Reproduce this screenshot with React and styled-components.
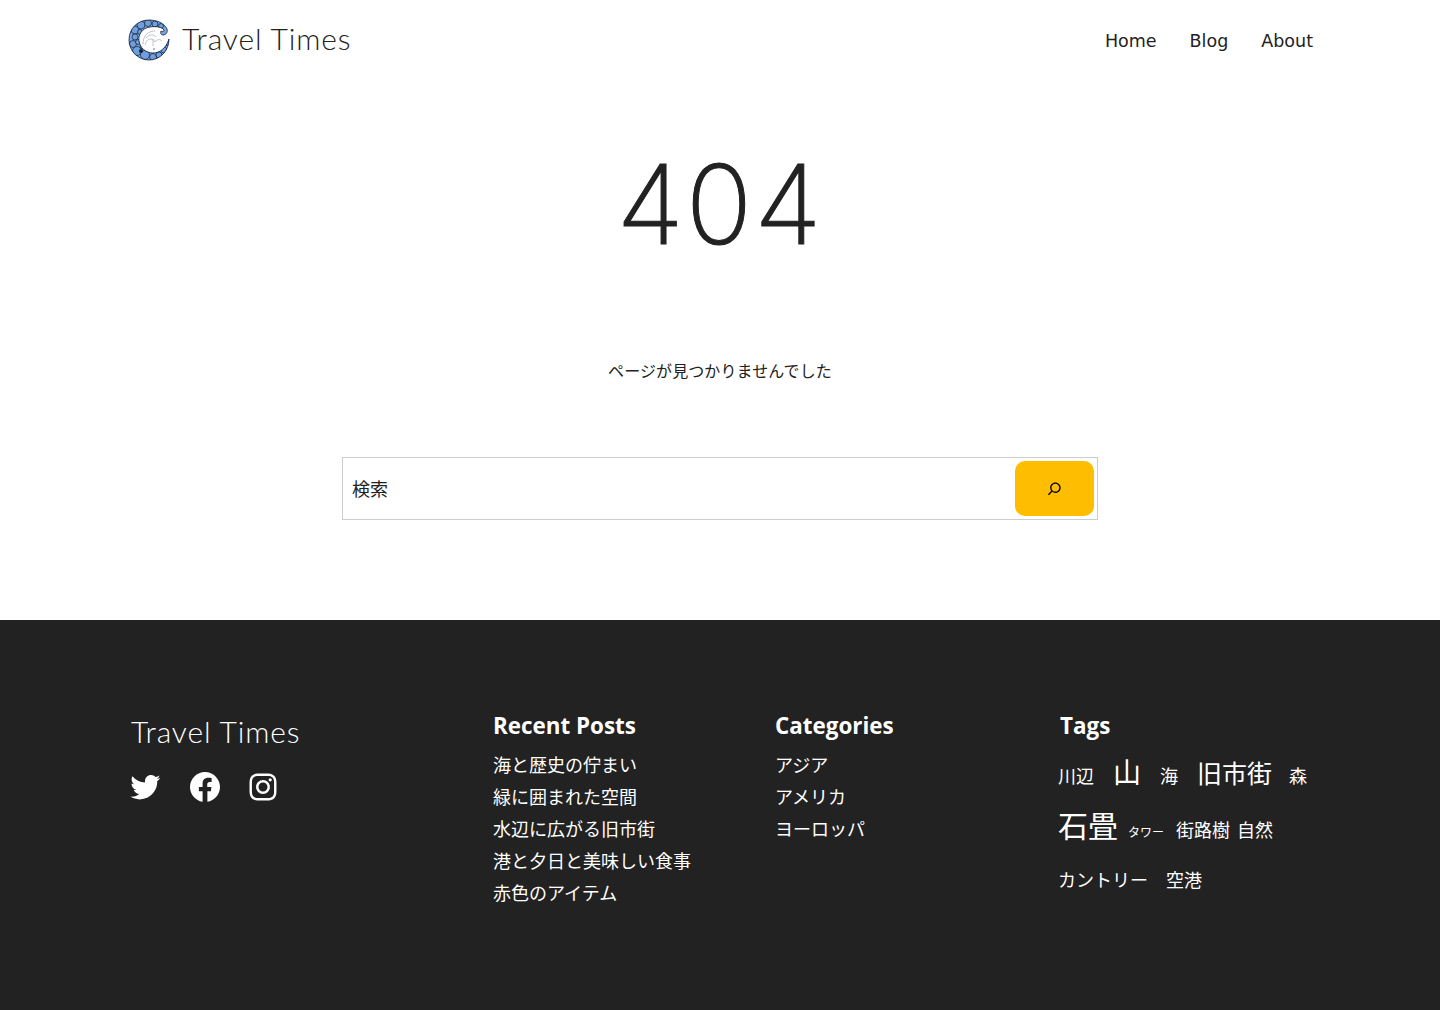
import React from 'react';
import styled, { createGlobalStyle } from 'styled-components';

const GlobalStyle = createGlobalStyle`
	* { box-sizing: border-box; }
	body {
		margin: 0;
		background: #fff;
		color: #222;
		font-family: "DejaVu Sans", "Noto Sans CJK JP", sans-serif;
	}
	a { color: inherit; text-decoration: none; }
`;

const Header = styled.header`
	height: 80px;
	padding: 0 127px 0 128px;
	display: flex;
	align-items: center;
	justify-content: space-between;
`;

const Brand = styled.div`
	display: flex;
	align-items: center;
	gap: 10px;
`;

const BrandName = styled.a`
	font-family: Lato, sans-serif;
	font-weight: 300;
	font-size: 30px;
	letter-spacing: 0.85px;
	line-height: 1;
	position: relative;
	top: -2px;
`;

const Nav = styled.nav`
	display: flex;
	gap: 33px;
	font-size: 17.5px;
	padding-top: 2px;
`;

const Main = styled.main`
	height: 540px;
	display: flex;
	flex-direction: column;
	align-items: center;
`;

const Title = styled.h1`
	margin: 43px 0 0;
	font-family: Inter, sans-serif;
	font-weight: 200;
	font-size: 110px;
	letter-spacing: 2px;
	line-height: 162px;
	-webkit-text-stroke: 1px #222;
`;

const Message = styled.p`
	margin: 75px 0 0;
	font-size: 16px;
	line-height: 24px;
	letter-spacing: 0.1px;
`;

const SearchForm = styled.form`
	margin-top: 73px;
	width: 756px;
	height: 63px;
	padding: 3px;
	display: flex;
	border: 1px solid #ccc;
`;

const SearchInput = styled.input`
	flex: 1;
	min-width: 0;
	padding: 2px 6px 0;
	border: none;
	outline: none;
	font: 18px "DejaVu Sans", "Noto Sans CJK JP", sans-serif;
	color: #222;
	&::placeholder { color: #222; opacity: 1; }
`;

const SearchButton = styled.button`
	width: 79px;
	border: none;
	border-radius: 10px;
	background: #ffbd00;
	display: flex;
	align-items: center;
	justify-content: center;
	padding: 0;
`;

const Footer = styled.footer`
	height: 390px;
	background: #222;
	color: #fff;
	padding: 89px 127px 0;
	display: grid;
	grid-template-columns: 366px 282px 283px 1fr;
`;

const BrandColumn = styled.div`
	padding-top: 9px;
`;

const FooterBrand = styled.div`
	padding-left: 4px;
`;

const Social = styled.div`
	margin-top: 20px;
	display: flex;
	gap: 24px;
`;

const SocialIcon = styled.svg`
	width: 36px;
	height: 36px;
	fill: #fff;
	margin-left: ${({ $nudge }) => $nudge || 0}px;
`;

const Heading = styled.h2`
	margin: 2px 0 9px;
	font-family: "Open Sans", sans-serif;
	font-size: 22.4px;
	line-height: 30px;
	font-weight: 700;
	padding-left: ${({ $indent }) => $indent || 0}px;
`;

const LinkList = styled.ul`
	margin: 0;
	padding: 0;
	list-style: none;
`;

const LinkItem = styled.li`
	font-size: 18px;
	line-height: 32px;
`;

const TagCloud = styled.div`
	width: 260px;
	display: flex;
	flex-wrap: wrap;
	align-items: baseline;
	row-gap: 10px;
	margin-top: 13px;
`;

const Tag = styled.a`
	font-size: ${({ $size }) => $size}px;
	line-height: ${({ $size }) => ($size < 14 ? 30 : 40)}px;
	margin-right: ${({ $gap }) => $gap}px;
`;

const CRESCENT = 'M41 21C41 33 32 42 21 42C10 42 1 33 1 22C1 10 10 2 21 2C29 2 36 5 39 11C40 14 38 17 35 17C33 17 32 15 33 13C34 14 36 14 36 12C34 9 28 8 22 9C14 10 10 17 11 23C12 30 18 35 25 35C32 35 38 30 41 21Z';

const logoCells = [
	[7, 12, 4], [13, 7, 4], [20, 5, 3.5], [27, 6, 3], [33, 8, 2.5], [7, 19, 3], [5, 26, 3.5], [10, 24, 2.5],
	[9, 33, 4.5], [15, 28, 3], [17, 37, 4.5], [25, 39, 3.5], [31, 37, 3], [36, 32, 3], [39, 25, 2.5], [12, 14, 2.5],
];

function Logo() {
	return (
		<svg width="44" height="44" viewBox="0 0 44 44">
			<defs>
				<clipPath id="crescent"><path d={CRESCENT} /></clipPath>
			</defs>
			<g clipPath="url(#crescent)">
				<rect width="44" height="44" fill="#7aa7e0" />
				{logoCells.map(([cx, cy, r]) => (
					<circle key={`${cx}-${cy}`} cx={cx} cy={cy} r={r} fill="#6f9fdc" stroke="#14213a" strokeWidth=".7" />
				))}
				<circle cx="13" cy="33" r="2" fill="#14213a" />
			</g>
			<path d={CRESCENT} fill="none" stroke="#14213a" strokeWidth=".8" />
			<path d="M15 26c0-8 5-13 12-13M18 20c3-4 8-4 10-1M17 27c1-4 3-6 6-6 2 0 3 1 4 3 2-3 5-3 7-1M25 21v7" fill="none" stroke="#a4abb3" strokeWidth=".7" />
			<path d="M26 30v2" stroke="#5f90d2" strokeWidth="1.2" />
		</svg>
	);
}

function TwitterIcon() {
	return (
		<SocialIcon viewBox="0 0 24 24">
			<path d="M22.23,5.924c-0.736,0.326-1.527,0.547-2.357,0.646c0.847-0.508,1.498-1.312,1.804-2.27 c-0.793,0.47-1.671,0.812-2.606,0.996C18.324,4.498,17.257,4,16.077,4c-2.266,0-4.103,1.837-4.103,4.103 c0,0.322,0.036,0.635,0.106,0.935C8.67,8.867,5.647,7.234,3.623,4.751C3.27,5.357,3.067,6.062,3.067,6.814 c0,1.424,0.724,2.679,1.825,3.415c-0.673-0.021-1.305-0.206-1.859-0.513c0,0.017,0,0.034,0,0.052c0,1.988,1.414,3.647,3.292,4.023 c-0.344,0.094-0.707,0.144-1.081,0.144c-0.264,0-0.521-0.026-0.772-0.074c0.522,1.63,2.038,2.816,3.833,2.85 c-1.404,1.1-3.174,1.756-5.096,1.756c-0.331,0-0.658-0.019-0.979-0.057c1.816,1.164,3.973,1.843,6.29,1.843 c7.547,0,11.675-6.252,11.675-11.675c0-0.178-0.004-0.355-0.012-0.531C20.985,7.47,21.68,6.747,22.23,5.924z" />
		</SocialIcon>
	);
}

function FacebookIcon() {
	return (
		<SocialIcon viewBox="0 0 24 24">
			<path d="M12 2C6.5 2 2 6.5 2 12c0 5 3.7 9.1 8.4 9.9v-7H7.9V12h2.5V9.8c0-2.5 1.5-3.9 3.8-3.9 1.1 0 2.2.2 2.2.2v2.5h-1.3c-1.2 0-1.6.8-1.6 1.6V12h2.8l-.4 2.9h-2.3v7C18.3 21.1 22 17 22 12c0-5.5-4.5-10-10-10z" />
		</SocialIcon>
	);
}

function InstagramIcon() {
	return (
		<SocialIcon viewBox="0 0 24 24" $nudge={-2}>
			<path d="M12,4.622c2.403,0,2.688,0.009,3.637,0.052c0.877,0.04,1.354,0.187,1.671,0.31c0.42,0.163,0.72,0.358,1.035,0.673 c0.315,0.315,0.51,0.615,0.673,1.035c0.123,0.317,0.27,0.794,0.31,1.671c0.043,0.949,0.052,1.234,0.052,3.637 s-0.009,2.688-0.052,3.637c-0.04,0.877-0.187,1.354-0.31,1.671c-0.163,0.42-0.358,0.72-0.673,1.035 c-0.315,0.315-0.615,0.51-1.035,0.673c-0.317,0.123-0.794,0.27-1.671,0.31c-0.949,0.043-1.233,0.052-3.637,0.052 s-2.688-0.009-3.637-0.052c-0.877-0.04-1.354-0.187-1.671-0.31c-0.42-0.163-0.72-0.358-1.035-0.673 c-0.315-0.315-0.51-0.615-0.673-1.035c-0.123-0.317-0.27-0.794-0.31-1.671C4.631,14.688,4.622,14.403,4.622,12 s0.009-2.688,0.052-3.637c0.04-0.877,0.187-1.354,0.31-1.671c0.163-0.42,0.358-0.72,0.673-1.035 c0.315-0.315,0.615-0.51,1.035-0.673c0.317-0.123,0.794-0.27,1.671-0.31C9.312,4.631,9.597,4.622,12,4.622 M12,3 C9.556,3,9.249,3.01,8.289,3.054C7.331,3.098,6.677,3.25,6.105,3.472C5.513,3.702,5.011,4.01,4.511,4.511 c-0.5,0.5-0.808,1.002-1.038,1.594C3.25,6.677,3.098,7.331,3.054,8.289C3.01,9.249,3,9.556,3,12c0,2.444,0.01,2.751,0.054,3.711 c0.044,0.958,0.196,1.612,0.418,2.185c0.23,0.592,0.538,1.094,1.038,1.594c0.5,0.5,1.002,0.808,1.594,1.038 c0.572,0.222,1.227,0.375,2.185,0.418C9.249,20.99,9.556,21,12,21s2.751-0.01,3.711-0.054c0.958-0.044,1.612-0.196,2.185-0.418 c0.592-0.23,1.094-0.538,1.594-1.038c0.5-0.5,0.808-1.002,1.038-1.594c0.222-0.572,0.375-1.227,0.418-2.185 C20.99,14.751,21,14.444,21,12s-0.01-2.751-0.054-3.711c-0.044-0.958-0.196-1.612-0.418-2.185c-0.23-0.592-0.538-1.094-1.038-1.594 c-0.5-0.5-1.002-0.808-1.594-1.038c-0.572-0.222-1.227-0.375-2.185-0.418C14.751,3.01,14.444,3,12,3L12,3z M12,7.378 c-2.552,0-4.622,2.069-4.622,4.622S9.448,16.622,12,16.622s4.622-2.069,4.622-4.622S14.552,7.378,12,7.378z M12,15 c-1.657,0-3-1.343-3-3s1.343-3,3-3s3,1.343,3,3S13.657,15,12,15z M16.804,6.116c-0.596,0-1.08,0.484-1.08,1.08 s0.484,1.08,1.08,1.08c0.596,0,1.08-0.484,1.08-1.08S17.401,6.116,16.804,6.116z" />
		</SocialIcon>
	);
}

function SearchIcon() {
	return (
		<svg width="21" height="21" viewBox="0 0 24 24" fill="#000">
			<path d="M13 5c-3.3 0-6 2.7-6 6 0 1.4.5 2.7 1.3 3.7l-3.8 3.8 1.1 1.1 3.8-3.8c1 .8 2.3 1.3 3.7 1.3 3.3 0 6-2.7 6-6S16.3 5 13 5zm0 10.5c-2.5 0-4.5-2-4.5-4.5s2-4.5 4.5-4.5 4.5 2 4.5 4.5-2 4.5-4.5 4.5z" />
		</svg>
	);
}

const recentPosts = ['海と歴史の佇まい', '緑に囲まれた空間', '水辺に広がる旧市街', '港と夕日と美味しい食事', '赤色のアイテム'];
const categories = ['アジア', 'アメリカ', 'ヨーロッパ'];
const tags = [
	['川辺', 18, 19], ['山', 28, 19], ['海', 18, 19], ['旧市街', 25, 17], ['森', 18, 0],
	['石畳', 30, 10], ['タワー', 12, 12], ['街路樹', 18, 7], ['自然', 18, 0],
	['カントリー', 18, 18], ['空港', 18, 0],
];

function App() {
	return (
		<>
			<GlobalStyle />
			<Header>
				<Brand>
					<Logo />
					<BrandName href="#">Travel Times</BrandName>
				</Brand>
				<Nav>
					<a href="#">Home</a>
					<a href="#">Blog</a>
					<a href="#">About</a>
				</Nav>
			</Header>
			<Main>
				<Title>404</Title>
				<Message>ページが見つかりませんでした</Message>
				<SearchForm onSubmit={(e) => e.preventDefault()}>
					<SearchInput placeholder="検索" />
					<SearchButton type="submit" aria-label="検索"><SearchIcon /></SearchButton>
				</SearchForm>
			</Main>
			<Footer>
				<BrandColumn>
					<FooterBrand>
						<BrandName href="#">Travel Times</BrandName>
					</FooterBrand>
					<Social>
						<TwitterIcon />
						<FacebookIcon />
						<InstagramIcon />
					</Social>
				</BrandColumn>
				<div>
					<Heading>Recent Posts</Heading>
					<LinkList>
						{recentPosts.map((title) => <LinkItem key={title}><a href="#">{title}</a></LinkItem>)}
					</LinkList>
				</div>
				<div>
					<Heading>Categories</Heading>
					<LinkList>
						{categories.map((title) => <LinkItem key={title}><a href="#">{title}</a></LinkItem>)}
					</LinkList>
				</div>
				<div>
					<Heading $indent={2}>Tags</Heading>
					<TagCloud>
						{tags.map(([name, size, gap]) => <Tag key={name} href="#" $size={size} $gap={gap}>{name}</Tag>)}
					</TagCloud>
				</div>
			</Footer>
		</>
	);
}

export default App;
